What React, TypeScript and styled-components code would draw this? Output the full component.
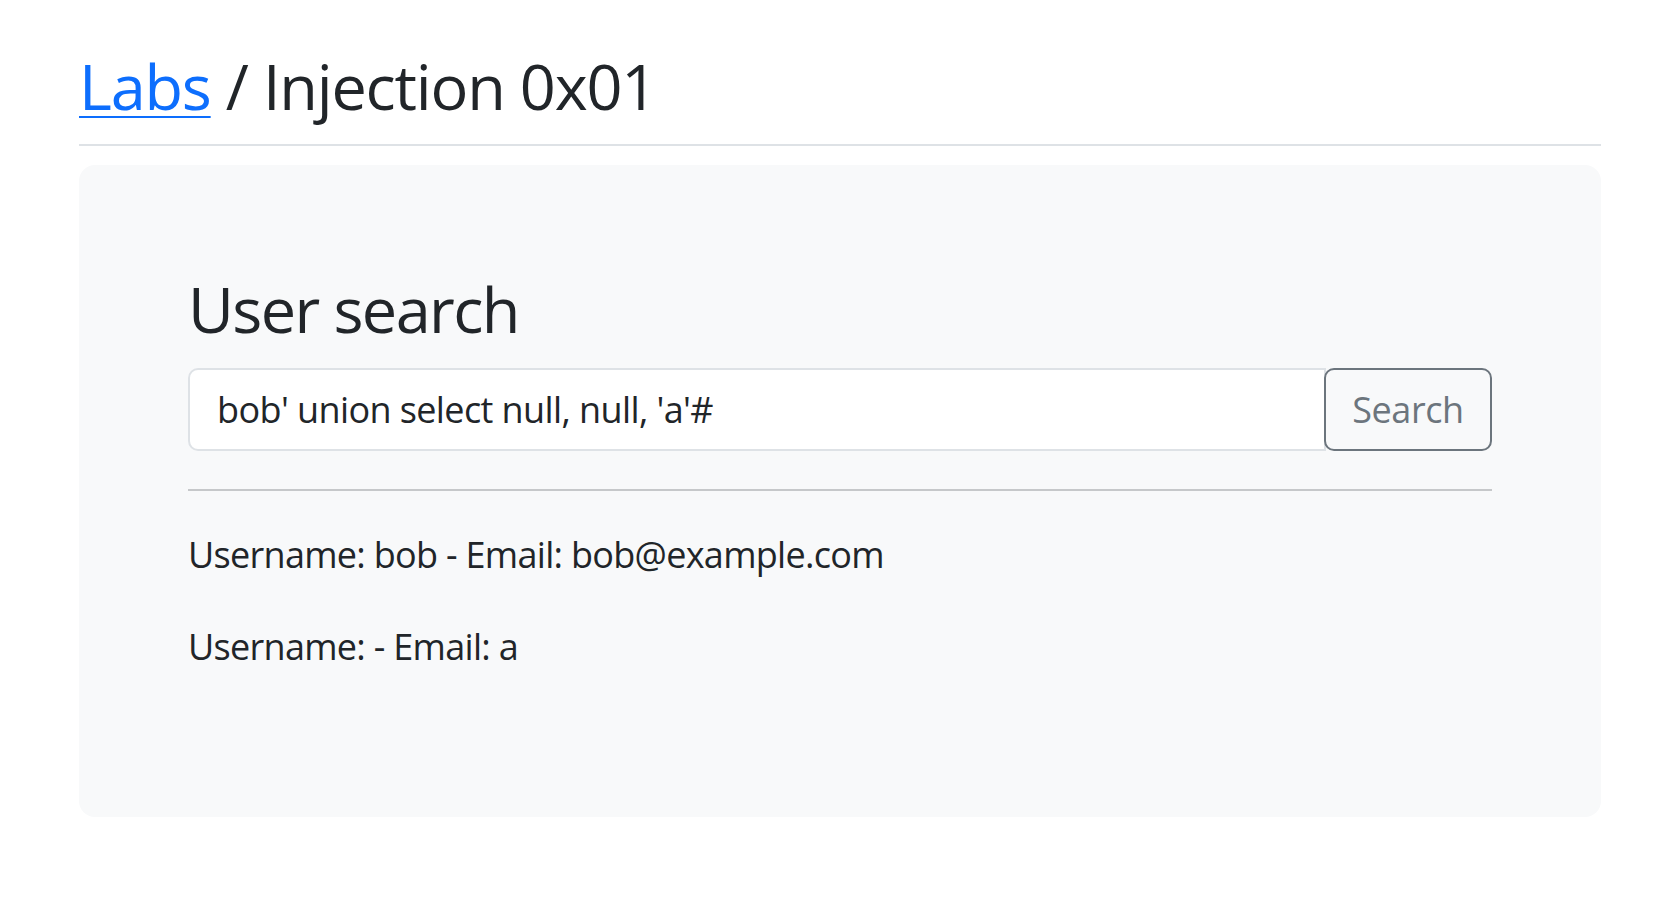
import React from "react";
import styled, { createGlobalStyle } from "styled-components";

const GlobalStyle = createGlobalStyle`
  html, body {
    margin: 0;
    padding: 0;
    background: #ffffff;
  }
  body {
    font-family: "Open Sans", "Noto Sans", "Liberation Sans", sans-serif;
    color: #212529;
    -webkit-font-smoothing: antialiased;
  }
  * { box-sizing: border-box; }
`;

const Page = styled.div`
  padding: 47px 77px 0 79px;
`;

const Header = styled.header`
  padding-bottom: 20px;
  border-bottom: 2px solid #dee2e6;
  margin-bottom: 19px;
`;

const Title = styled.h1`
  margin: 0;
  font-size: 63px;
  font-weight: 400;
  line-height: 77px;
  letter-spacing: -1.2px;
`;

const Crumb = styled.a`
  color: #0d6efd;
  text-decoration: underline;
  text-decoration-thickness: 2px;
  text-underline-offset: 6px;
`;

const Card = styled.section`
  background: #f8f9fa;
  border-radius: 16px;
  padding: 105px 109px 106px;
`;

const CardTitle = styled.h2`
  margin: 0 0 21px;
  font-size: 63px;
  font-weight: 400;
  line-height: 77px;
  letter-spacing: -1.6px;
`;

const SearchForm = styled.form`
  display: flex;
  align-items: stretch;
`;

const SearchInput = styled.input`
  flex: 1;
  min-width: 0;
  height: 83px;
  padding: 0 27px;
  border: 2px solid #dee2e6;
  border-radius: 10px 0 0 10px;
  background: #ffffff;
  color: #212529;
  font-family: inherit;
  font-size: 36px;
  letter-spacing: -0.6px;
  outline: none;
`;

const SearchButton = styled.button`
  width: 168px;
  height: 83px;
  margin-left: -2px;
  border: 2px solid #6c757d;
  border-radius: 10px;
  background: transparent;
  color: #6c757d;
  font-family: inherit;
  font-size: 36px;
  letter-spacing: -0.4px;
  cursor: pointer;
`;

const Divider = styled.hr`
  margin: 38px 0 36px;
  border: 0;
  border-top: 2px solid #c6c8ca;
`;

const Result = styled.p`
  margin: 0 0 37px;
  font-size: 36px;
  line-height: 55px;
  letter-spacing: -0.7px;
`;

const results = [
  { username: "bob", email: "bob@example.com" },
  { username: "", email: "a" },
];

export default function App() {
  return (
    <>
      <GlobalStyle />
      <Page>
        <Header>
          <Title>
            <Crumb href="#">Labs</Crumb> / Injection 0x01
          </Title>
        </Header>
        <Card>
          <CardTitle>User search</CardTitle>
          <SearchForm onSubmit={(e) => e.preventDefault()}>
            <SearchInput defaultValue="bob' union select null, null, 'a'#" />
            <SearchButton type="submit">Search</SearchButton>
          </SearchForm>
          <Divider />
          {results.map((r, i) => (
            <Result key={i}>
              Username: {r.username}
              {r.username ? " " : ""}- Email: {r.email}
            </Result>
          ))}
        </Card>
      </Page>
    </>
  );
}
